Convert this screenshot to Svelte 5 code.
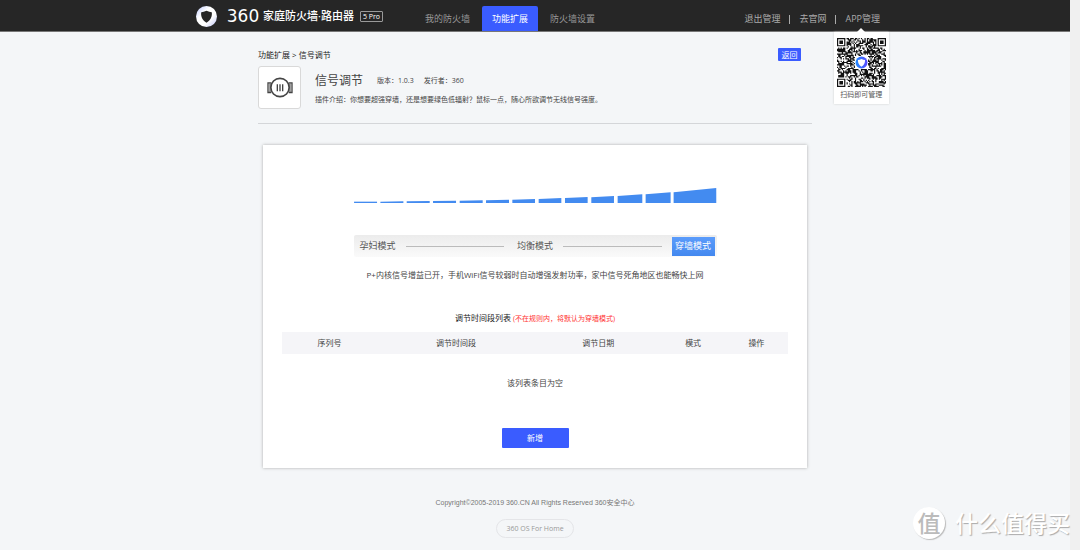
<script>
  const tabs = ['我的防火墙', '功能扩展', '防火墙设置'];
  let activeTab = $state('功能扩展');

  const modes = ['孕妇模式', '均衡模式', '穿墙模式'];
  let activeMode = $state('穿墙模式');

  const columns = ['序列号', '调节时间段', '调节日期', '模式', '操作'];

  // left, right, top-left, top-right of every signal bar; all stand on y = 46
  const bars = [
    [0, 69, 41, 41], [79, 148, 41, 40], [158, 227, 40, 39], [237, 306, 39, 38],
    [317, 386, 38, 37], [396, 465, 37, 35], [475, 543, 35, 33], [554, 622, 33, 30],
    [633, 701, 30, 27], [712, 780, 28, 24], [791, 865, 24, 19], [875, 950, 19, 13],
    [959, 1087, 13, 0]
  ];

  const size = 41;
  function finder(x, y) {
    for (const [ox, oy] of [[0, 0], [size - 7, 0], [0, size - 7]]) {
      const dx = x - ox;
      const dy = y - oy;
      if (dx >= -1 && dx <= 7 && dy >= -1 && dy <= 7) {
        const r = Math.max(Math.abs(dx - 3), Math.abs(dy - 3));
        return r === 3 || r <= 1 ? 1 : 0;
      }
    }
    return -1;
  }
  function qrPath() {
    let seed = 20190;
    let d = '';
    for (let y = 0; y < size; y++) {
      for (let x = 0; x < size; x++) {
        seed = (seed * 48271) % 2147483647;
        const f = finder(x, y);
        const centre = Math.abs(x - 20) < 6 && Math.abs(y - 20) < 6;
        const on = f >= 0 ? f === 1 : !centre && seed / 2147483647 < 0.56;
        if (on) d += `M${x} ${y}h1v1h-1z`;
      }
    }
    return d;
  }
  const qr = qrPath();
</script>

<div class="shell">
  <div class="page">
    <header>
      <div class="bar">
        <div class="brand">
          <svg class="shield" viewBox="0 0 42 42" aria-hidden="true">
            <defs>
              <linearGradient id="ring" x1="0" y1="0" x2="1" y2="1">
                <stop offset="0" stop-color="#b9c6ff" />
                <stop offset=".35" stop-color="#fff" />
                <stop offset=".65" stop-color="#fff" />
                <stop offset="1" stop-color="#b9c0f5" />
              </linearGradient>
            </defs>
            <circle cx="21" cy="21" r="21" fill="url(#ring)" />
            <path d="M21 9.500c4 2 7 2.500 10.500 3C33 21 29 29 21 33.500 13 29 9 21 10.500 12.500 14 12 17 11.500 21 9.500z" fill="#262626" />
          </svg>
          <span class="num">360</span>
          <span class="name">家庭防火墙·路由器</span>
          <span class="model">5 Pro</span>
        </div>
        <nav>
          {#each tabs as tab}
            <button class="tab" class:active={tab === activeTab} onclick={() => (activeTab = tab)}>{tab}</button>
          {/each}
        </nav>
        <div class="links">
          <a href="#logout">退出管理</a>
          <i></i>
          <a href="#site">去官网</a>
          <i></i>
          <div class="app">
            <a href="#app">APP管理</a>
            <div class="popup">
              <svg viewBox="0 0 41 41" role="img" aria-label="二维码">
                <defs>
                  <linearGradient id="badge" x1="0" y1="0" x2="1" y2="0">
                    <stop offset="0" stop-color="#1f8bff" />
                    <stop offset="1" stop-color="#5a4bff" />
                  </linearGradient>
                </defs>
                <path d={qr} fill="#111" />
                <circle cx="20.500" cy="20.500" r="5" fill="url(#badge)" />
                <path d="M20.500 17.500c1 .6 2 .8 3 .9 0 2.600-1 4.500-3 5.600-2-1.100-3-3-3-5.600 1-.1 2-.3 3-.9z" fill="#fff" />
              </svg>
              <span>扫码即可管理</span>
            </div>
          </div>
        </div>
      </div>
    </header>

    <main>
      <div class="crumbs">
        <span>功能扩展 &gt; 信号调节</span>
        <button class="back">返回</button>
      </div>
      <section class="plugin">
        <div class="icon">
          <svg viewBox="0 0 78 62" fill="none" stroke="#444" aria-hidden="true">
            <circle cx="39" cy="31" r="27.500" stroke-width="5" />
            <path d="M13 17H3v29h10M65 17h10v29H65" stroke-width="4" />
            <path d="M9 18v27M69 18v27" stroke-width="3" />
            <path d="M31 21v21M39 21v21M47 21v21" stroke-width="4" />
          </svg>
        </div>
        <div class="about">
          <div class="heading">
            <h1>信号调节</h1>
            <span>版本：1.0.3</span>
            <span>发行者：360</span>
          </div>
          <p>插件介绍：你想要超强穿墙，还是想要绿色低辐射？鼠标一点，随心所欲调节无线信号强度。</p>
        </div>
      </section>

      <section class="card">
        <div class="signal">
          <svg viewBox="0 0 1089 46" aria-hidden="true">
            {#each bars as [l, r, tl, tr]}
              <polygon points="{l},{tl} {r},{tr} {r},46 {l},46" fill="#438bf0" />
            {/each}
          </svg>
          <div class="modes">
            {#each modes as mode, n}
              {#if n > 0}<hr />{/if}
              <button class:active={mode === activeMode} onclick={() => (activeMode = mode)}>{mode}</button>
            {/each}
          </div>
        </div>
        <p class="hint">P+内核信号增益已开，手机WiFi信号较弱时自动增强发射功率，家中信号死角地区也能畅快上网</p>
        <h2>调节时间段列表 <small>(不在规则内，将默认为穿墙模式)</small></h2>
        <table>
          <colgroup>
            <col class="c-no" /><col class="c-time" /><col class="c-date" /><col class="c-mode" /><col class="c-act" />
          </colgroup>
          <thead>
            <tr>{#each columns as column}<th>{column}</th>{/each}</tr>
          </thead>
          <tbody>
            <tr><td colspan="5">该列表条目为空</td></tr>
          </tbody>
        </table>
        <button class="add">新增</button>
      </section>
    </main>

    <footer>
      <p>Copyright©2005-2019 360.CN All Rights Reserved 360安全中心</p>
      <a href="#os">360 OS For Home</a>
    </footer>
  </div>
  <div class="track"></div>
  <div class="mark"><b>值</b><span>什么值得买</span></div>
</div>

<style>
  :global(body) {
    background: #f4f6f8;
  }
  .shell {
    display: flex;
    position: relative;
    min-height: 100vh;
    color: #444;
    font: 8px/12px "Open Sans", "Noto Sans CJK SC", sans-serif;
  }
  .shell * {
    box-sizing: border-box;
  }
  button {
    font: inherit;
    border: 0;
    padding: 0;
    cursor: pointer;
  }
  a {
    color: inherit;
    text-decoration: none;
  }
  p, h1, h2 {
    margin: 0;
    font-weight: 400;
  }
  .page {
    flex: 1;
    min-width: 0;
  }
  .track {
    width: 10px;
    background: #f0f0f0;
  }
  header {
    background: #262626;
    border-bottom: 1px solid #777;
  }
  .bar {
    display: flex;
    max-width: 708px;
    height: 31px;
    margin: 0 auto;
    padding: 0 9px 0 15px;
  }
  .brand {
    display: flex;
    align-items: center;
    color: #fff;
    padding-top: 1px;
  }
  .shield {
    width: 21px;
    height: 21px;
    margin-right: 6px;
  }
  .num {
    width: 40px;
    text-align: center;
    font: 400 18px/20px "DejaVu Sans", sans-serif;
    font-size: 17px;
  }
  .name {
    font-size: 11px;
    font-weight: 500;
    line-height: 16px;
  }
  .model {
    margin-left: 6px;
    padding: 0 2px;
    border: 1px solid #999;
    border-radius: 1px;
    font-size: 7px;
    line-height: 9px;
  }
  nav {
    display: flex;
    align-items: flex-end;
    gap: 2px;
    margin-left: 32px;
  }
  .tab {
    height: 25px;
    padding: 0 10px;
    border-radius: 2px 2px 0 0;
    background: none;
    color: #999;
    font-size: 9px;
  }
  .tab.active {
    background: #3a5cff;
    color: #fff;
  }
  .links {
    display: flex;
    align-items: center;
    gap: 9px;
    margin-left: auto;
    padding-top: 7px;
    color: #aaa;
    font-size: 9px;
  }
  .links i {
    width: 1px;
    height: 9px;
    background: #aaa;
  }
  .app {
    position: relative;
  }
  .popup {
    position: absolute;
    z-index: 2;
    top: 19px;
    left: 50%;
    width: 55px;
    margin-left: -29px;
    padding: 6px 3px 3px;
    background: #fff;
    box-shadow: 0 0 2px #ccc;
    color: #555;
    font-size: 7px;
    line-height: 12px;
    text-align: center;
    white-space: nowrap;
  }
  .popup::before {
    content: '';
    position: absolute;
    top: -4px;
    left: 50%;
    margin-left: -4px;
    border: 4px solid transparent;
    border-top: 0;
    border-bottom-color: #fff;
  }
  .popup svg {
    display: block;
    width: 100%;
    margin-bottom: 2px;
  }
  main {
    max-width: 554px;
    margin: 0 auto;
    padding-top: 16px;
  }
  .crumbs {
    display: flex;
    align-items: center;
    justify-content: space-between;
    padding-right: 11px;
    color: #222;
  }
  .back {
    width: 23px;
    height: 13px;
    border-radius: 1px;
    background: #3a5cff;
    color: #fff;
    line-height: 13px;
  }
  .plugin {
    display: flex;
    gap: 14px;
    padding: 5px 0 14px;
    border-bottom: 1px solid #d4d6d9;
  }
  .icon {
    display: grid;
    place-items: center;
    width: 43px;
    height: 43px;
    border: 1px solid #d9d9d9;
    border-radius: 3px;
    background: #fff;
  }
  .icon svg {
    width: 26px;
    height: 21px;
  }
  .heading {
    display: flex;
    align-items: center;
    gap: 10px;
    font-size: 7px;
    padding-top: 6px;
  }
  h1 {
    margin-right: 4px;
    font-size: 12px;
    line-height: 18px;
  }
  .about p {
    padding-top: 4px;
    font-size: 7px;
  }
  .card {
    margin: 21px 5px 0;
    padding: 43px 19px 20px;
    background: #fff;
    box-shadow: 0 0 3px #aaa;
    text-align: center;
  }
  .signal {
    max-width: 363px;
    margin: 0 auto;
  }
  .signal svg {
    display: block;
    width: 100%;
  }
  .modes {
    display: flex;
    align-items: center;
    height: 22px;
    margin-top: 32px;
    padding: 0 2px 0 1px;
    border-radius: 2px;
    background: linear-gradient(#ececec, #fafafa);
  }
  .modes hr {
    flex: 1;
    margin: 0 8px 0 5px;
    border: 0;
    border-top: 1px solid #bbb;
  }
  .modes button {
    width: 46px;
    height: 19px;
    background: none;
    color: #555;
    font-size: 9px;
  }
  .modes button.active {
    width: 43px;
    margin-left: 2px;
    background: linear-gradient(#5b9cfb, #4388ef);
    color: #fff;
  }
  .hint {
    margin-top: 12px;
  }
  h2 {
    margin-top: 31px;
    color: #222;
    font-size: 8px;
    line-height: 12px;
  }
  h2 small {
    color: #f33;
    font-size: 7px;
  }
  table {
    width: 100%;
    margin-top: 7px;
    border-collapse: collapse;
    table-layout: fixed;
  }
  .c-no { width: 18.75%; }
  .c-time { width: 31.25%; }
  .c-date { width: 25%; }
  .c-mode, .c-act { width: 12.5%; }
  th {
    height: 22px;
    padding: 0;
    background: #f5f5f8;
    font-weight: 400;
  }
  td {
    height: 58px;
    padding: 0;
  }
  .add {
    width: 67px;
    height: 20px;
    margin-top: 16px;
    border-radius: 1px;
    background: #3a5cff;
    color: #fff;
  }
  footer {
    padding-top: 28px;
    color: #777;
    font: 7px/14px "Liberation Sans", "Noto Sans CJK SC", sans-serif;
    text-align: center;
  }
  footer a {
    display: inline-block;
    margin-top: 9px;
    padding: 0 9px;
    border: 1px solid #e4e5e8;
    border-radius: 10px;
    color: #999;
    font: 7px/17px "Open Sans", sans-serif;
  }
  .mark {
    display: flex;
    position: absolute;
    right: 10px;
    bottom: 11px;
    align-items: center;
    gap: 10px;
    color: #fff;
    font-size: 23px;
    font-weight: 500;
    line-height: 32px;
    text-shadow: 1px 1px 1px #aaa;
  }
  .mark b {
    width: 32px;
    height: 32px;
    border-radius: 50%;
    background: #fff;
    box-shadow: 1px 1px 1px #bbb;
    color: #bbb;
    font-weight: 500;
    text-align: center;
    text-shadow: none;
  }
</style>
